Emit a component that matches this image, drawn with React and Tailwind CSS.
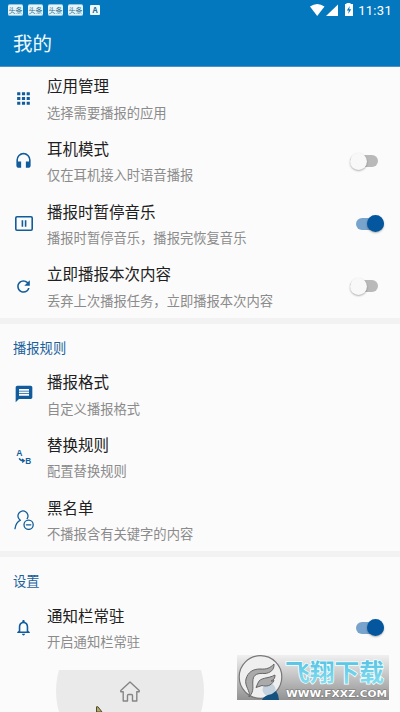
import { useState } from "react"
import { MdApps, MdHeadset, MdRefresh, MdMessage, MdNotificationsNone } from "react-icons/md"

const PauseBox = () => (
  <svg width="18" height="15" viewBox="0 0 18 15" fill="none" stroke="currentColor" strokeWidth="1.6">
    <rect x="0.8" y="0.8" width="16.4" height="13.4" rx="1.2" />
    <path d="M7.4 4.3v6.4M10.6 4.3v6.4" strokeWidth="1.6" />
  </svg>
)

const ReplaceIcon = () => (
  <svg width="16" height="16" viewBox="0 0 16 16" fill="currentColor" className="font-['Liberation_Sans'] font-bold">
    <text x="0.3" y="7.2" fontSize="8.6">A</text>
    <text x="9.2" y="15.4" fontSize="8.2">B</text>
    <path d="M3.2 9.2c.6 1.9 2 2.6 4.6 2.6M6.1 9.9l2.2 1.9-2.2 1.6" fill="none" stroke="currentColor" strokeWidth="1.3" />
  </svg>
)

const UserMinus = () => (
  <svg width="20" height="20" viewBox="0 0 20 20" fill="none" stroke="currentColor" strokeWidth="1.3" strokeLinecap="round">
    <path d="M6.4 10.2A5 5 0 1 1 13.2 8.6M6.4 10.2C3.6 11.6 1.6 14.4 1 18.6" />
    <circle cx="14.6" cy="14.8" r="4.6" />
    <path d="M12.4 14.8h4.4" />
  </svg>
)

const mainRows = [
  { icon: <MdApps size={19} />, title: "应用管理", desc: "选择需要播报的应用" },
  { icon: <MdHeadset size={19} />, title: "耳机模式", desc: "仅在耳机接入时语音播报", toggle: true },
  { icon: <PauseBox />, title: "播报时暂停音乐", desc: "播报时暂停音乐，播报完恢复音乐", toggle: true, on: true },
  { icon: <MdRefresh size={19} />, title: "立即播报本次内容", desc: "丢弃上次播报任务，立即播报本次内容", toggle: true },
]

const ruleRows = [
  { icon: <MdMessage size={20} />, title: "播报格式", desc: "自定义播报格式" },
  { icon: <ReplaceIcon />, title: "替换规则", desc: "配置替换规则" },
  { icon: <UserMinus />, title: "黑名单", desc: "不播报含有关键字的内容" },
]

const settingRows = [
  { icon: <MdNotificationsNone size={19} />, title: "通知栏常驻", desc: "开启通知栏常驻", toggle: true, on: true },
]

const Toggle = ({ on, onClick }) => (
  <button type="button" onClick={onClick} className="flex w-[36px] items-center">
    {on ? (
      <span className="ml-[6px] flex h-[12px] w-[28px] items-center justify-end rounded-full bg-[#78a3cc]">
        <span className="size-[17px] shrink-0 rounded-full bg-[#04579f] shadow-[0_1px_2px_rgba(0,0,0,0.3)]" />
      </span>
    ) : (
      <span className="flex h-[12px] w-[28px] items-center rounded-full bg-[#b9b9b9]">
        <span className="size-[17px] shrink-0 rounded-full bg-[#f8f8f8] shadow-[0_1px_2px_rgba(0,0,0,0.3)]" />
      </span>
    )}
  </button>
)

const Row = ({ icon, title, desc, toggle, on }) => {
  const [checked, setChecked] = useState(!!on)

  return (
    <div className="flex h-[62.7px] items-center pr-[14px]">
      <div className="flex w-[47px] shrink-0 justify-center text-[#115c9c]">{icon}</div>
      <div className="flex-1 whitespace-nowrap pt-[1.2px]">
        <p className="text-[15.5px] leading-[23px] text-[#202020]">{title}</p>
        <p className="mt-[4.4px] text-[13.3px] leading-[22px] text-[#8b8b8b]">{desc}</p>
      </div>
      {toggle && <Toggle on={checked} onClick={() => setChecked(!checked)} />}
    </div>
  )
}

const StatusBar = () => (
  <div className="flex h-[20px] items-center justify-between pl-2 pr-[8px]">
    <div className="flex items-center gap-[5px]">
      {[0, 1, 2, 3].map((n) => (
        <span
          key={n}
          className="flex h-[12px] w-[15px] items-center justify-center overflow-hidden whitespace-nowrap rounded-[2px] border-y border-[#8cc4df] bg-[#e4f5fa] text-[7px] leading-none text-[#306f91]"
        >
          头条
        </span>
      ))}
      <span className="ml-[2px] flex size-[10px] items-center justify-center rounded-[1px] bg-[#eef9fc] text-[8px] font-bold leading-none text-[#246c99]">
        A
      </span>
    </div>
    <div className="flex items-center text-white">
      <svg width="48" height="14" viewBox="0 0 48 14" fill="currentColor">
        <path d="M0 3.5Q7.2-1.5 14.5 3.5L7.2 13z" />
        <path d="M28 1.5V13H16z" />
        <path d="M36.5 1V0h4v1H43v12h-8V1z" />
        <path d="m39.8 3-3 4.5h2l-.6 3.5 3-4.8h-2z" fill="#0478be" />
      </svg>
      <span className="font-[Roboto] text-[13px] leading-none tracking-[0.3px]">11:31</span>
    </div>
  </div>
)

const SectionTitle = ({ children }) => (
  <h2 className="flex h-[39.3px] items-center pl-[13px] pt-[9px] text-[13.3px] text-[#1b629b]">{children}</h2>
)

const Watermark = () => (
  <div className="absolute left-[237px] top-[655px] h-[45px] w-[152px]">
    <svg width="152" height="45" viewBox="0 0 152 45">
      <defs>
        <linearGradient id="plate" x1="0" y1="0" x2="0" y2="1">
          <stop offset="0" stopColor="#f0f0f0" />
          <stop offset="1" stopColor="#929292" />
        </linearGradient>
        <linearGradient id="sky" x1="0" y1="0" x2="0" y2="1">
          <stop offset="0" stopColor="#4cbbe0" />
          <stop offset="1" stopColor="#8ee2f2" />
        </linearGradient>
      </defs>
      <rect width="152" height="45" fill="url(#plate)" />
      <circle cx="23.5" cy="22" r="21.3" fill="#efefef" stroke="#777" strokeWidth="1.2" />
      <circle cx="32" cy="34.5" r="6.5" fill="#c3d2de" />
      <path d="M25 45q1-3 6-5 5-1 8-4 3 4 3 9z" fill="#14517f" />
      <path
        d="M12 42C14 36 7 31 9 24c2-7 7-10 14-10 7 .5 10-1 14-5 .5 6-4 9-9 9.500-8-.5-11 1-12 6-1 7 2 11-4 17.500z"
        fill="#aaa"
        stroke="#666"
      />
      <path d="M21 28c2-6 10-4 17-8 0 3-1 5-4 6 1 0 2 0 3-.5-3 6-8 6-12 5l-6 2z" fill="#aaa" stroke="#666" />
      <text x="48" y="26" textLength="99" lengthAdjust="spacingAndGlyphs" fontSize="23.5" fontWeight="bold" fill="url(#sky)" stroke="#f4ffff" strokeWidth="1.5" paintOrder="stroke">飞翔下载</text>
      <text x="49" y="42" textLength="101" lengthAdjust="spacingAndGlyphs" fontSize="9.4" fontWeight="bold" fill="#fff" stroke="#777" strokeWidth="1" paintOrder="stroke" className="font-['DejaVu_Sans']">WWW.FXXZ.COM</text>
    </svg>
  </div>
)

const App = () => {
  return (
    <div className="relative flex h-[712px] w-[400px] flex-col overflow-hidden bg-[#fbfbfb] font-['Noto_Sans_CJK_SC',sans-serif]">
      <header className="h-[67px] shrink-0 border-b border-[#4b94c1] bg-[#0478be]">
        <StatusBar />
        <h1 className="pl-[13px] pt-[9px] text-[19.5px] leading-[28px] text-[#f1faff]">我的</h1>
      </header>

      <main className="h-[603px] shrink-0">
        <section>
          {mainRows.map((row) => (
            <Row key={row.title} {...row} />
          ))}
        </section>
        <section className="border-t-[6px] border-[#f2f2f2]">
          <SectionTitle>播报规则</SectionTitle>
          {ruleRows.map((row) => (
            <Row key={row.title} {...row} />
          ))}
        </section>
        <section className="border-t-[6px] border-[#f2f2f2]">
          <SectionTitle>设置</SectionTitle>
          {settingRows.map((row) => (
            <Row key={row.title} {...row} />
          ))}
        </section>
      </main>

      {/* bottom navigation, the pressed ripple is cut off by the bar */}
      <nav className="relative flex h-[42px] shrink-0 items-center overflow-hidden pl-[56px]">
        <div className="flex size-[148px] shrink-0 items-center justify-center rounded-full bg-[#eaeaea]">
          <svg width="20" height="21" viewBox="0 0 20 21" fill="none" stroke="#858585" strokeWidth="1.4" strokeLinejoin="round">
            <path d="M10 1 .8 9.400v1.400h2.400V20h4.300v-5.500q0-1 1-1h3q1 0 1 1V20h4.300v-9.200h2.400V9.400z" />
          </svg>
        </div>
        <svg className="absolute left-[96px] top-[36px]" width="8" height="6" viewBox="0 0 8 6">
          <path d="M.5 6V.8H2L6 6z" fill="#b7ad61" stroke="#4b4935" />
        </svg>
      </nav>

      <Watermark />
    </div>
  )
}

export default App
